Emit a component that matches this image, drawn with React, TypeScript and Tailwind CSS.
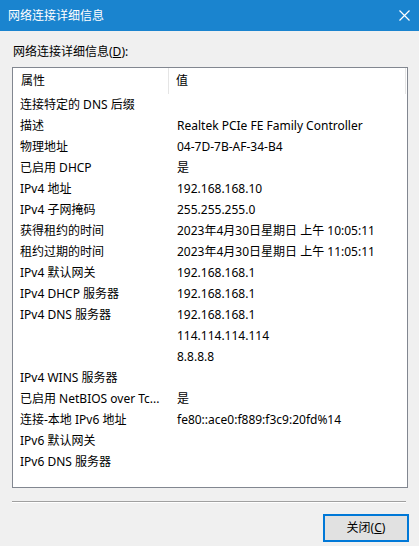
import React from "react";

const rows: [string, string][] = [
  ["连接特定的 DNS 后缀", ""],
  ["描述", "Realtek PCIe FE Family Controller"],
  ["物理地址", "04-7D-7B-AF-34-B4"],
  ["已启用 DHCP", "是"],
  ["IPv4 地址", "192.168.168.10"],
  ["IPv4 子网掩码", "255.255.255.0"],
  ["获得租约的时间", "2023年4月30日星期日 上午 10:05:11"],
  ["租约过期的时间", "2023年4月30日星期日 上午 11:05:11"],
  ["IPv4 默认网关", "192.168.168.1"],
  ["IPv4 DHCP 服务器", "192.168.168.1"],
  ["IPv4 DNS 服务器", "192.168.168.1"],
  ["", "114.114.114.114"],
  ["", "8.8.8.8"],
  ["IPv4 WINS 服务器", ""],
  ["已启用 NetBIOS over Tc...", "是"],
  ["连接-本地 IPv6 地址", "fe80::ace0:f889:f3c9:20fd%14"],
  ["IPv6 默认网关", ""],
  ["IPv6 DNS 服务器", ""],
];

export default function App() {
  return (
    <div
      className="w-[419px] h-[546px] bg-[#f0f0f0] flex flex-col text-[12px] text-black"
      style={{ fontFamily: '"Noto Sans", "Noto Sans CJK SC", sans-serif' }}
    >
      <div className="h-[31px] bg-[#1a84cf] flex items-center justify-between pl-[8px] pr-[9px] text-white">
        <span className="text-[12px] leading-none">网络连接详细信息</span>
        <svg width="11" height="11" viewBox="0 0 11 11">
          <path d="M0.5 0.5 L10.5 10.5 M10.5 0.5 L0.5 10.5" stroke="white" strokeWidth="1.2" />
        </svg>
      </div>
      <div className="flex flex-col px-[12px] pt-[13px]">
        <div className="pl-[1px] leading-[16px] h-[23px]">
          网络连接详细信息(<span className="underline">D</span>):
        </div>
        <div className="w-[396px] h-[421px] border border-[#828790] bg-white flex flex-col">
          <div className="h-[26px] flex items-center">
            <div className="w-[156px] h-full flex items-center pl-[8px] border-r border-[#e5e5e5]">属性</div>
            <div className="flex-1 h-full flex items-center pl-[7px] border-r border-[#e5e5e5] mr-[1px]">值</div>
          </div>
          {rows.map(([k, v], i) => (
            <div key={i} className="h-[21px] flex items-center whitespace-nowrap">
              <div className="w-[156px] pl-[7px]">{k}</div>
              <div className="flex-1 pl-[8px]">{v}</div>
            </div>
          ))}
        </div>
        <div className="mt-[13px] w-[394px] h-[2px] border-t border-[#a0a0a0] border-b border-b-white" />
        <div className="flex justify-end mt-[11px] pr-[-2px]">
          <button className="w-[86px] h-[28px] -mr-[2px] bg-[#e1e1e1] border-2 border-[#0078d7] flex items-center justify-center">
            关闭(<span className="underline">C</span>)
          </button>
        </div>
      </div>
    </div>
  );
}
